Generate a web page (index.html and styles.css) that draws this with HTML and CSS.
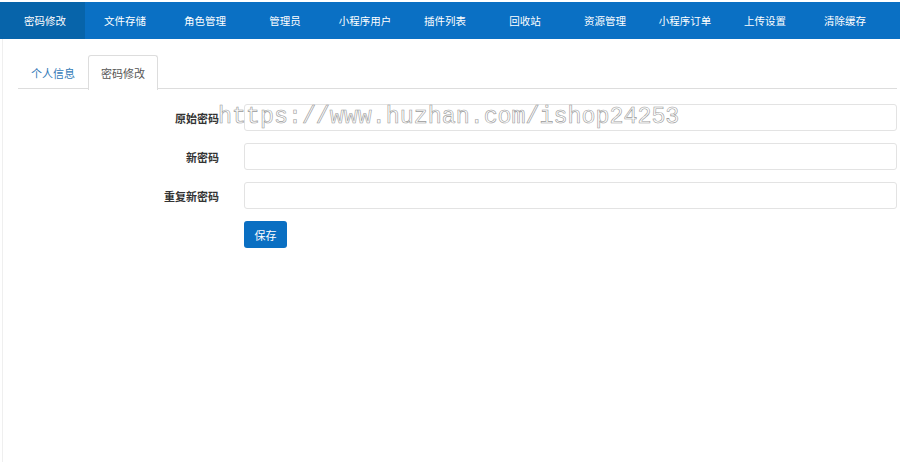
FILE: index.html
```html
<!DOCTYPE html>
<html lang="zh">
<head>
<meta charset="utf-8">
<title>密码修改</title>
<link rel="stylesheet" href="styles.css">
</head>
<body>
<nav class="nav">
  <a class="nav-item active">密码修改</a>
  <a class="nav-item">文件存储</a>
  <a class="nav-item">角色管理</a>
  <a class="nav-item">管理员</a>
  <a class="nav-item">小程序用户</a>
  <a class="nav-item">插件列表</a>
  <a class="nav-item">回收站</a>
  <a class="nav-item">资源管理</a>
  <a class="nav-item">小程序订单</a>
  <a class="nav-item">上传设置</a>
  <a class="nav-item">清除缓存</a>
</nav>
<main class="page">
  <div class="tabs">
    <a class="tab">个人信息</a>
    <a class="tab current">密码修改</a>
  </div>
  <form class="form">
    <label class="label">原始密码</label>
    <input class="input" type="password">
    <label class="label">新密码</label>
    <input class="input" type="password">
    <label class="label">重复新密码</label>
    <input class="input" type="password">
    <span></span>
    <div><button type="button" class="btn">保存</button></div>
  </form>
</main>
<div class="watermark">https://www.huzhan.com/ishop24253</div>
</body>
</html>
```

FILE: styles.css
```css
* { box-sizing: border-box; }
html, body { margin: 0; padding: 0; background: #fff; }
body {
  font-family: "Noto Sans CJK SC", "Liberation Sans", sans-serif;
  font-size: 11px;
  color: #333;
  height: 462px;
  overflow: hidden;
  padding-top: 2px;
}
.nav {
  display: flex;
  height: 37px;
  background: #0a70c4;
  padding-left: 5px;
}
.nav-item {
  width: 80px;
  display: flex;
  align-items: center;
  justify-content: center;
  color: #fff;
  font-size: 10.5px;
}
.nav-item.active {
  width: 85px;
  margin-left: -5px;
  padding-left: 5px;
  background: #0764aa;
}
.page {
  margin-left: 2px;
  border-left: 1px solid #efefef;
  padding: 16px 3px 0 0;
  height: 423px;
}
.tabs {
  display: flex;
  margin-left: 15px;
  border-bottom: 1px solid #ddd;
  height: 34px;
}
.tab {
  padding: 0 12px;
  display: flex;
  align-items: center;
  border: 1px solid transparent;
  border-bottom: none;
  border-radius: 3px 3px 0 0;
  color: #337ab7;
  height: 34px;
}
.tab.current {
  color: #555;
  border-color: #ddd;
  background: #fff;
  height: 35px;
}
.form {
  display: grid;
  grid-template-columns: 216px 1fr;
  column-gap: 25px;
  row-gap: 12px;
  margin-top: 15px;
  align-items: center;
}
.label {
  text-align: right;
  font-weight: bold;
  color: #333;
}
.input {
  height: 27px;
  border: 1px solid #e3e3e3;
  border-radius: 3px;
  background: #fff;
  width: 100%;
  outline: none;
}
.btn {
  width: 43px;
  height: 27px;
  border: none;
  border-radius: 3px;
  background: #0a6fc2;
  color: #fff;
  font-family: inherit;
  font-size: 11px;
  padding: 0;
}
.watermark {
  position: absolute;
  left: 218px;
  top: 103px;
  font-family: "Liberation Mono", monospace;
  font-size: 23.3px;
  line-height: 28px;
  color: #fff;
  -webkit-text-stroke: 0.6px #9a9a9a;
  white-space: nowrap;
  pointer-events: none;
}
```
